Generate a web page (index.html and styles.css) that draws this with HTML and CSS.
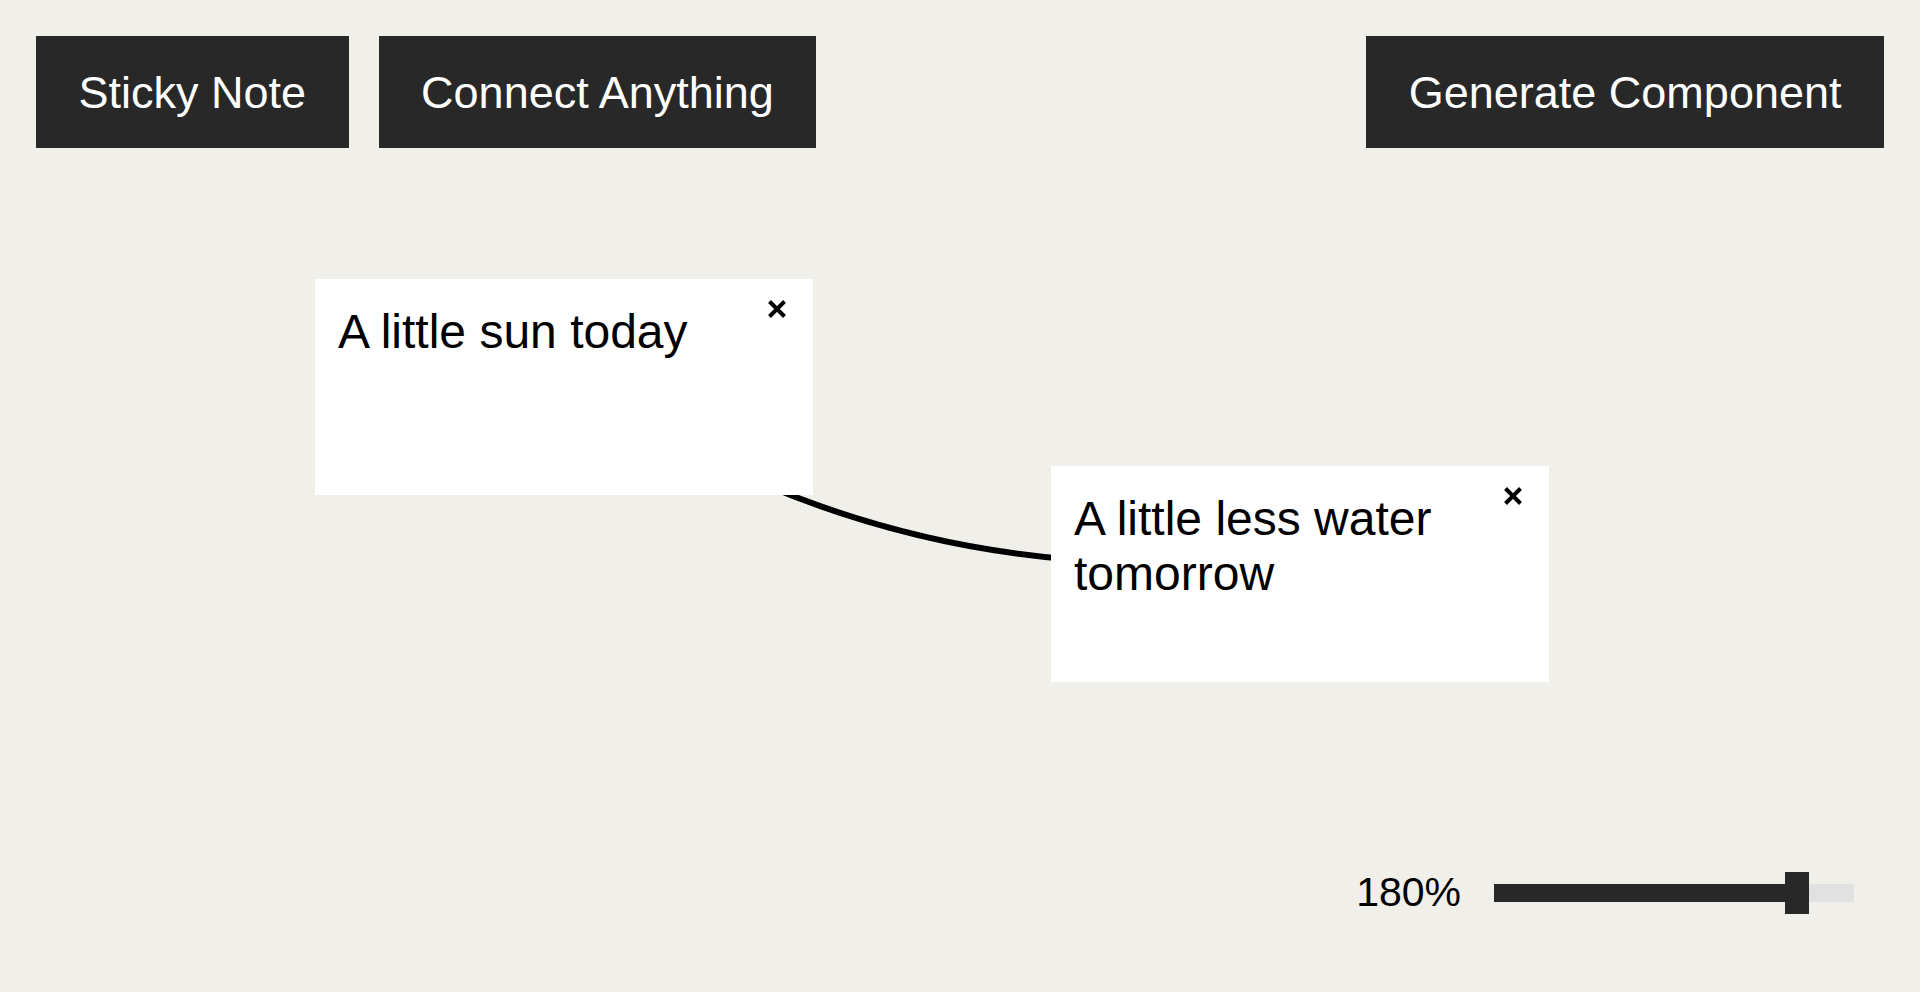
FILE: index.html
```html
<!DOCTYPE html>
<html lang="en">
<head>
<meta charset="utf-8">
<title>Board</title>
<link rel="stylesheet" href="styles.css">
</head>
<body>
<div class="board">
  <div class="canvas">
    <svg class="links" width="1920" height="992" viewBox="0 0 1920 992">
      <path d="M 740 474 Q 922.4 556.1 1120 562" class="link"/>
    </svg>
    <div class="note note-a">
      <div class="note-text">A little sun today</div>
      <button class="close" aria-label="Close">
        <svg width="18" height="18" viewBox="0 0 18 18"><path d="M1.5 1.5 L16.5 16.5 M16.5 1.5 L1.5 16.5"/></svg>
      </button>
    </div>
    <div class="note note-b">
      <div class="note-text">A little less water tomorrow</div>
      <button class="close" aria-label="Close">
        <svg width="18" height="18" viewBox="0 0 18 18"><path d="M1.5 1.5 L16.5 16.5 M16.5 1.5 L1.5 16.5"/></svg>
      </button>
    </div>
  </div>
  <header class="toolbar">
    <div class="tools">
      <button class="btn">Sticky Note</button>
      <button class="btn">Connect Anything</button>
    </div>
    <button class="btn">Generate Component</button>
  </header>
  <div class="zoom">
    <span class="zoom-label">180%</span>
    <input class="zoom-range" type="range" min="50" max="200" value="180" style="--fill:84%">
  </div>
</div>
</body>
</html>
```
FILE: styles.css
```css
* { box-sizing: border-box; }
html, body { margin: 0; padding: 0; }
body {
  background: #f0efea;
  font-family: "Liberation Sans", Arial, sans-serif;
  color: #000;
  overflow: hidden;
}
.board {
  position: relative;
  width: 100vw;
  height: 100vh;
}
.toolbar {
  position: relative;
  z-index: 2;
  display: flex;
  justify-content: space-between;
  align-items: flex-start;
  padding: 36px 36px 0 36px;
}
.tools {
  display: flex;
  gap: 30px;
}
.btn {
  height: 112px;
  padding: 0 42.5px;
  border: none;
  border-radius: 0;
  background: #282828;
  color: #fff;
  font-family: "Liberation Sans", Arial, sans-serif;
  font-size: 45px;
  line-height: 1;
  cursor: pointer;
}
.canvas {
  position: absolute;
  inset: 0;
  z-index: 1;
}
.links {
  position: absolute;
  left: 0;
  top: 0;
}
.link {
  fill: none;
  stroke: #000;
  stroke-width: 6;
}
.note {
  position: absolute;
  width: 498px;
  height: 216px;
  background: #fff;
  padding: 25px 60px 23px 23px;
}
.note-a { left: 315px; top: 279px; }
.note-b { left: 1051px; top: 466px; }
.note-text {
  font-size: 48px;
  line-height: normal;
}
.close {
  position: absolute;
  top: 21px;
  right: 27px;
  width: 18px;
  height: 18px;
  padding: 0;
  border: none;
  background: transparent;
  display: flex;
  cursor: pointer;
}
.close path {
  stroke: #000;
  stroke-width: 4;
  fill: none;
}
.zoom {
  position: absolute;
  z-index: 2;
  right: 66px;
  bottom: 76px;
  display: flex;
  align-items: center;
  gap: 33px;
}
.zoom-label {
  font-size: 41px;
  line-height: normal;
}
.zoom-range {
  -webkit-appearance: none;
  appearance: none;
  width: 360px;
  height: 42px;
  margin: 0;
  background: transparent;
}
.zoom-range::-webkit-slider-runnable-track {
  height: 18px;
  background: linear-gradient(to right, #282828 var(--fill), #e1e1e1 var(--fill));
  border: none;
}
.zoom-range::-webkit-slider-thumb {
  -webkit-appearance: none;
  appearance: none;
  width: 24px;
  height: 42px;
  margin-top: -12px;
  background: #282828;
  border: none;
  border-radius: 0;
}
```
